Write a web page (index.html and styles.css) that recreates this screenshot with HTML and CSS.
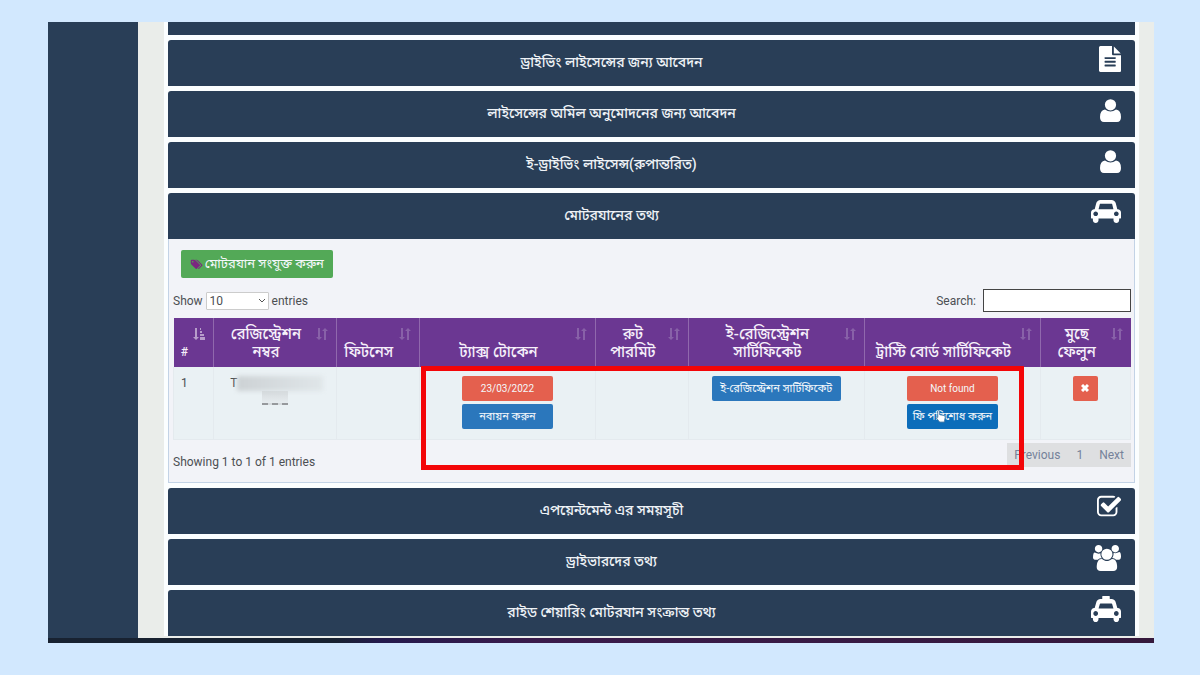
FILE: index.html
```html
<!DOCTYPE html>
<html lang="bn">
<head>
  <meta charset="UTF-8" />
  <meta name="viewport" content="width=device-width, initial-scale=1" />
  <title>মোটরযানের তথ্য</title>
  <link rel="stylesheet" href="styles.css">
</head>
<body>
  <svg class="defs" aria-hidden="true">
    <symbol id="icon-user" viewBox="0 0 21 23"><circle cx="10.5" cy="5.8" r="5.6"/><path d="M5 10.4q5.500 4 11 0 5 .6 5 7.600 0 5-4 5H4q-4 0-4-5 0-7 5-7.600z"/></symbol>
    <symbol id="icon-sort" viewBox="0 0 12 12"><path d="M2 0h2v9h2l-3 3-3-3h2zM8 12V3H6l3-3 3 3h-2v9z"/></symbol>
  </svg>

  <div class="window">
    <div class="screen">
      <aside class="sidebar"></aside>
      <main class="main">
        <div class="accordion">
          <div class="panel-cut"></div>

          <button class="panel-head" type="button">
            <span class="title">ড্রাইভিং লাইসেন্সের জন্য আবেদন</span>
            <svg class="icon" viewBox="128 0 1536 1792"><path d="M1596 476q14 14 28 36h-472v-472q22 14 36 28zm-476 164h544v1056q0 40-28 68t-68 28h-1344q-40 0-68-28t-28-68v-1600q0-40 28-68t68-28h800v544q0 40 28 68t68 28zm160 736v-64q0-14-9-23t-23-9h-704q-14 0-23 9t-9 23v64q0 14 9 23t23 9h704q14 0 23-9t9-23zm0-256v-64q0-14-9-23t-23-9h-704q-14 0-23 9t-9 23v64q0 14 9 23t23 9h704q14 0 23-9t9-23zm0-256v-64q0-14-9-23t-23-9h-704q-14 0-23 9t-9 23v64q0 14 9 23t23 9h704q14 0 23-9t9-23z"/></svg>
          </button>
          <button class="panel-head" type="button">
            <span class="title">লাইসেন্সের অমিল অনুমোদনের জন্য আবেদন</span>
            <svg class="icon icon-user"><use href="#icon-user"/></svg>
          </button>
          <button class="panel-head" type="button">
            <span class="title">ই-ড্রাইভিং লাইসেন্স(রুপান্তরিত)</span>
            <svg class="icon icon-user"><use href="#icon-user"/></svg>
          </button>

          <section class="panel-open">
            <button class="panel-head" type="button" aria-expanded="true">
              <span class="title">মোটরযানের তথ্য</span>
              <svg class="icon icon-car" viewBox="0 128 2048 1600" preserveAspectRatio="none"><path d="M480 1088q0-66-47-113t-113-47-113 47-47 113 47 113 113 47 113-47 47-113zm36-320h1016l-89-357q-2-8-14-17.5t-21-9.5h-768q-9 0-21 9.5t-14 17.5zm1372 320q0-66-47-113t-113-47-113 47-47 113 47 113 113 47 113-47 47-113zm160-96v384q0 14-9 23t-23 9h-96v128q0 80-56 136t-136 56-136-56-56-136v-128h-1024v128q0 80-56 136t-136 56-136-56-56-136v-128h-96q-14 0-23-9t-9-23v-384q0-93 65.5-158.5t158.5-65.5h28l105-419q23-94 104-157.5t179-63.5h768q98 0 179 63.5t104 157.5l105 419h28q93 0 158.5 65.5t65.5 158.5z"/></svg>
            </button>
            <div class="panel-body">
              <button class="btn btn-add" type="button">
                <svg class="tags" viewBox="0 0 2048 1792"><path d="M576 448q0-53-37.5-90.5t-90.5-37.5-90.5 37.5-37.5 90.5 37.5 90.5 90.5 37.5 90.5-37.5 37.5-90.5zm1067 576q0 53-37 90l-491 492q-39 37-91 37-53 0-90-37l-715-716q-38-37-64.5-101t-26.5-117v-416q0-52 38-90t90-38h416q53 0 117 26.5t102 64.5l715 714q37 39 37 91zm384 0q0 53-37 90l-491 492q-39 37-91 37-36 0-59-14t-53-45l470-470q37-37 37-90 0-52-37-91l-715-714q-38-38-102-64.5t-117-26.5h224q53 0 117 26.5t102 64.5l715 714q37 39 37 91z"/></svg>
                <span>মোটরযান সংযুক্ত করুন</span>
              </button>

              <div class="table-tools">
                <label class="length">Show
                  <span class="select-wrap">
                    <select>
                      <option>10</option>
                      <option>25</option>
                      <option>50</option>
                    </select>
                    <svg class="chevron" viewBox="0 0 8 6"><path d="M1 1l3 3 3-3"/></svg>
                  </span>
                  entries</label>
                <label class="search">Search: <input type="search"></label>
              </div>

              <table class="vehicles">
                <colgroup>
                  <col class="col-id"><col class="col-reg"><col class="col-fit"><col class="col-wide">
                  <col class="col-route"><col class="col-wide"><col class="col-wide"><col class="col-del">
                </colgroup>
                <thead>
                  <tr>
                    <th class="first"><svg class="sort sorted" viewBox="0 0 12 12"><path d="M2 0h2v9h2l-3 3-3-3h2zM7 0h1v2H7zM7 3h2v2H7zM7 6h4v2H7zM7 9h5v3H7z"/></svg>#</th>
                    <th><svg class="sort"><use href="#icon-sort"/></svg>রেজিস্ট্রেশন<br>নম্বর</th>
                    <th><svg class="sort"><use href="#icon-sort"/></svg>ফিটনেস</th>
                    <th><svg class="sort"><use href="#icon-sort"/></svg>ট্যাক্স টোকেন</th>
                    <th><svg class="sort"><use href="#icon-sort"/></svg>রুট<br>পারমিট</th>
                    <th><svg class="sort"><use href="#icon-sort"/></svg>ই-রেজিস্ট্রেশন<br>সার্টিফিকেট</th>
                    <th><svg class="sort"><use href="#icon-sort"/></svg>ট্রাস্টি বোর্ড সার্টিফিকেট</th>
                    <th><svg class="sort"><use href="#icon-sort"/></svg>মুছে<br>ফেলুন</th>
                  </tr>
                </thead>
                <tbody>
                  <tr>
                    <td class="first">1</td>
                    <td>
                      <div class="reg">T<span class="smudge"></span></div>
                      <div class="reg-rest"></div>
                    </td>
                    <td></td>
                    <td>
                      <div class="actions">
                        <button class="btn red" type="button">23/03/2022</button>
                        <button class="btn blue" type="button">নবায়ন করুন</button>
                      </div>
                    </td>
                    <td></td>
                    <td>
                      <div class="actions">
                        <button class="btn blue long" type="button">ই-রেজিস্ট্রেশন সার্টিফিকেট</button>
                      </div>
                    </td>
                    <td>
                      <div class="actions">
                        <button class="btn red" type="button">Not found</button>
                        <button class="btn blue hovered" type="button">ফি পরিশোধ করুন
                          <svg class="cursor" viewBox="0 0 12 14"><path d="M3 1q1-1 2 0v4l5 1q1 0 1 2l-1 5H5L1 8q0-1 2 0z"/></svg>
                        </button>
                      </div>
                    </td>
                    <td>
                      <div class="actions">
                        <button class="btn red small" type="button" aria-label="Delete"><svg class="cross" viewBox="0 0 8 8"><path d="M1 1l6 6M7 1l-6 6"/></svg></button>
                      </div>
                    </td>
                  </tr>
                </tbody>
              </table>

              <div class="table-foot">
                <div class="info">Showing 1 to 1 of 1 entries</div>
                <nav class="pages">
                  <a href="#">Previous</a>
                  <a href="#">1</a>
                  <a href="#">Next</a>
                </nav>
              </div>
              <div class="highlight"></div>
            </div>
          </section>

          <button class="panel-head" type="button">
            <span class="title">এপয়েন্টমেন্ট এর সময়সূচী</span>
            <svg class="icon" viewBox="64 0 1664 1792"><path d="M1472 930v318q0 119-84.5 203.5t-203.5 84.5h-832q-119 0-203.5-84.5t-84.5-203.5v-832q0-119 84.5-203.5t203.5-84.5h832q63 0 117 25 15 7 18 23 3 17-9 29l-49 49q-10 10-23 10-3 0-9-2-23-6-45-6h-832q-66 0-113 47t-47 113v832q0 66 47 113t113 47h832q66 0 113-47t47-113v-254q0-13 9-22l64-64q10-10 23-10 6 0 12 3 20 8 20 29zm231-489l-814 814q-24 24-57 24t-57-24l-430-430q-24-24-24-57t24-57l110-110q24-24 57-24t57 24l263 263 647-647q24-24 57-24t57 24l110 110q24 24 24 57t-24 57z"/></svg>
          </button>
          <button class="panel-head" type="button">
            <span class="title">ড্রাইভারদের তথ্য</span>
            <svg class="icon" viewBox="64 0 1920 1792"><path d="M657 896q-162 5-265 128h-134q-82 0-138-40.5t-56-118.5q0-353 124-353 6 0 43.5 21t97.5 42.5 119 21.5q67 0 133-23-5 37-5 66 0 159 93 293zm1071 637q0 120-73 189.5t-194 69.5h-874q-121 0-194-69.5t-73-189.5q0-53 3.5-103.5t14-109 26.5-108.5 43-97.5 62-81 85.5-53.5 111.5-20q10 0 43 21.5t73 48 107 48 135 21.5 135-21.5 107-48 73-48 43-21.5q61 0 111.5 20t85.5 53.5 62 81 43 97.5 26.5 108.5 14 109 3.5 103.5zm-1024-1277q0 106-75 181t-181 75-181-75-75-181 75-181 181-75 181 75 75 181zm704 384q0 159-112.5 271.5t-271.5 112.5-271.5-112.5-112.5-271.5 112.5-271.5 271.5-112.5 271.5 112.5 112.5 271.5zm576 225q0 78-56 118.5t-138 40.5h-134q-103-123-265-128 93-134 93-293 0-29-5-66 66 23 133 23 59 0 119-21.5t97.5-42.5 43.5-21q124 0 124 353zm-128-609q0 106-75 181t-181 75-181-75-75-181 75-181 181-75 181 75 75 181z"/></svg>
          </button>
          <button class="panel-head" type="button">
            <span class="title">রাইড শেয়ারিং মোটরযান সংক্রান্ত তথ্য</span>
            <svg class="icon icon-taxi" viewBox="0 0 2048 1664" preserveAspectRatio="none"><path fill-rule="evenodd" d="M1824 768q93 0 158.5 65.5t65.5 158.5v384q0 14-9 23t-23 9h-96v64q0 80-56 136t-136 56-136-56-56-136v-64h-1024v64q0 80-56 136t-136 56-136-56-56-136v-64h-96q-14 0-23-9t-9-23v-384q0-93 65.5-158.5t158.5-65.500h28l105-355q23-94 104-157.5t179-63.5h128v-160q0-32 32-32h448q32 0 32 32v160h128q98 0 179 63.5t104 157.5l105 355zM320 1280q66 0 113-47t47-113-47-113-113-47-113 47-47 113 47 113 113 47zm196-480h1016l-89-293q-2-8-14-17.5t-21-9.5h-768q-9 0-21 9.5t-14 17.5zm1212 480q66 0 113-47t47-113-47-113-113-47-113 47-47 113 47 113 113 47z"/></svg>
          </button>
        </div>
      </main>
    </div>
    <div class="taskbar"></div>
  </div>
</body>
</html>
```

FILE: styles.css
```css
* {
  box-sizing: border-box;
}

body, button, select, input {
  font-family: Roboto, "Noto Sans Bengali", "Noto Sans", sans-serif;
}

body {
  margin: 0;
  padding: 22px 46px 32px 48px;
  height: 100vh;
  background: #d2e8fe;
  color: #4c4f53;
  font-size: 12px;
}

button {
  border: none;
  cursor: pointer;
}

.defs {
  display: none;
}

.window {
  display: flex;
  flex-direction: column;
  height: 100%;
  overflow: hidden;
}

.screen {
  display: flex;
  flex: 1;
  min-height: 0;
  overflow: hidden;
}

.sidebar {
  width: 90px;
  background: #293e57;
}

.main {
  flex: 1;
  padding: 0 15px 0 26px;
  background: #eaedea;
}

.accordion {
  display: flex;
  flex-direction: column;
  gap: 5px;
  padding: 0 4px;
  background: #fbfeff;
}

.panel-cut {
  height: 13px;
  background: #293e57;
}

/* panel headers */
.panel-head {
  display: grid;
  grid-template-columns: 1fr 80px;
  width: 100%;
  height: 46px;
  padding: 0;
  border-radius: 3px 3px 0 0;
  background: #293e57;
  color: #eef2f6;
}

.title {
  align-self: center;
  font-size: 14px;
  font-weight: 500;
}

.icon {
  justify-self: end;
  align-self: start;
  height: 26px;
  margin: 6px 14px 0 0;
  fill: #fff;
}

.icon-user {
  width: 21px;
  height: 23px;
  margin-top: 8px;
}

.icon-car {
  width: 30px;
  height: 23px;
  margin-top: 7px;
}

.icon-taxi {
  width: 30px;
  height: 26px;
}

/* open panel */
.panel-body {
  position: relative;
  height: 244px;
  padding: 11px 3px 0 4px;
  border: 1px solid #c3d3e6;
  border-top: none;
  background: #f2f3f8;
}

.btn {
  height: 24px;
  padding: 0 6px;
  border-radius: 2px;
  color: #f4f8fb;
  font-size: 11px;
  white-space: nowrap;
}

.btn-add {
  display: flex;
  align-items: center;
  justify-content: center;
  gap: 2px;
  min-width: 152px;
  height: 28px;
  margin-left: 8px;
  background: #53a957;
  font-size: 13px;
}

.tags {
  height: 11px;
  fill: #7b2780;
}

.table-tools {
  display: flex;
  justify-content: space-between;
  align-items: center;
  margin: 11px 0 6px;
}

.length, .search {
  display: flex;
  align-items: center;
  gap: 3px;
}

.search {
  gap: 7px;
}

.search input {
  width: 148px;
  height: 23px;
  border: 1px solid #444;
  border-radius: 0;
  background: #fff;
}

.select-wrap {
  display: grid;
  align-items: center;
}

.select-wrap select,
.select-wrap .chevron {
  grid-area: 1 / 1;
}

.select-wrap select {
  width: 63px;
  height: 18px;
  padding: 0 3px;
  border: 1px solid #ccc;
  border-radius: 1px;
  background: #fff;
  color: #4c4f53;
  font-size: 12px;
  appearance: none;
}

.chevron {
  justify-self: end;
  width: 8px;
  margin-right: 3px;
  fill: none;
  stroke: #555;
  pointer-events: none;
}

.vehicles {
  width: 100%;
  border-collapse: collapse;
  table-layout: fixed;
}

.col-id { width: 4.2%; }
.col-reg { width: 12.8%; }
.col-fit { width: 8.7%; }
.col-wide { width: 18.4%; }
.col-route { width: 9.7%; }
.col-del { width: 9.4%; }

.vehicles th {
  height: 49px;
  padding: 0 22px 6px 4px;
  border-left: 1px solid #9068ad;
  background: #6b3792;
  color: #f6f0fa;
  font-size: 15px;
  font-weight: 500;
  line-height: 18px;
  text-align: center;
  vertical-align: bottom;
  white-space: nowrap;
  position: relative;
}

.vehicles th.first {
  border-left: none;
  font-size: 12px;
}

.sort {
  position: absolute;
  top: 10px;
  right: 8px;
  width: 12px;
  height: 12px;
  fill: #8861a8;
}

.sort.sorted {
  fill: #b79dca;
}

.vehicles td {
  height: 72px;
  padding: 9px 4px 0;
  border: 1px solid #e4eaee;
  border-top: none;
  background: #eaf1f4;
  vertical-align: top;
}

.vehicles td.first {
  padding-left: 7px;
}

.reg {
  display: flex;
  padding-left: 12px;
}

/* hidden part of the registration number */
.smudge {
  width: 86px;
  height: 15px;
  background: linear-gradient(to right, #cdd2d5, #e0e6e9);
  filter: blur(2px);
}

.reg-rest {
  width: 26px;
  height: 14px;
  margin: 0 auto;
  border-bottom: 2px dashed #96999c;
  background: linear-gradient(#d5dadd, #e6ecef);
}

.actions {
  display: flex;
  flex-direction: column;
  align-items: center;
  gap: 3px;
}

.actions .btn {
  min-width: 91px;
  height: 25px;
}

.actions .long {
  min-width: 129px;
}

.actions .small {
  min-width: 25px;
}

.actions .red {
  background: #e4604e;
  font-size: 10px;
}

.blue {
  background: #2b77bc;
}

.hovered {
  position: relative;
  background: #0c6dba;
}

.cursor {
  position: absolute;
  top: 6px;
  left: 28px;
  height: 13px;
  fill: #fff;
  stroke: #4b7ca8;
}

.cross {
  width: 8px;
  fill: none;
  stroke: #fff;
  stroke-width: 3;
}

.table-foot {
  display: flex;
  justify-content: space-between;
  margin-top: 3px;
}

.info {
  padding-top: 12px;
}

.pages {
  display: flex;
  align-items: center;
  gap: 16px;
  height: 24px;
  padding: 0 7px;
  background: #dedfe1;
}

.pages a {
  color: #75829a;
  text-decoration: none;
}

/* marks the certificate buttons */
.highlight {
  position: absolute;
  top: 127px;
  left: 26.1%;
  right: 11.4%;
  height: 104px;
  border: 5px solid #f30508;
  pointer-events: none;
}

.taskbar {
  height: 5px;
  background: linear-gradient(to right, #182231 26%, #241a4d 30%, #3a1b4b 44%, #35193c);
}
```
